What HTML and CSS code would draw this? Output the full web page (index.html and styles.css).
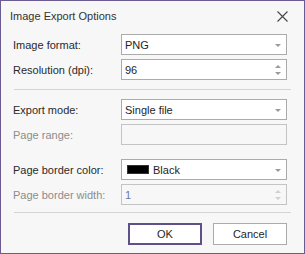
FILE: index.html
```html
<!DOCTYPE html>
<html>
<head>
<meta charset="utf-8">
<link rel="stylesheet" href="styles.css">
</head>
<body>
<div class="dialog">
  <div class="titlebar">
    <span class="title">Image Export Options</span>
    <svg class="close" width="11" height="11" viewBox="0 0 11 11"><path d="M0.5 0.5 L10.5 10.5 M10.5 0.5 L0.5 10.5" stroke="#444" stroke-width="1.1" fill="none"/></svg>
  </div>
  <div class="content">
    <div class="grid">
      <label class="lbl">Image format:</label>
      <div class="field"><span class="val">PNG</span><span class="arrow"></span></div>
      <label class="lbl">Resolution (dpi):</label>
      <div class="field"><span class="val">96</span><span class="spin"><span class="up"></span><span class="down"></span></span></div>
    </div>
    <div class="sep"></div>
    <div class="grid">
      <label class="lbl">Export mode:</label>
      <div class="field"><span class="val">Single file</span><span class="arrow"></span></div>
      <label class="lbl dis">Page range:</label>
      <div class="field disabled"><span class="val"></span></div>
    </div>
    <div class="grid group">
      <label class="lbl">Page border color:</label>
      <div class="field"><span class="swatch"></span><span class="val">Black</span><span class="arrow"></span></div>
      <label class="lbl dis">Page border width:</label>
      <div class="field disabled"><span class="val num">1</span><span class="spin dis"><span class="up"></span><span class="down"></span></span></div>
    </div>
    <div class="sep sep2"></div>
    <div class="buttons">
      <button class="btn default">OK</button>
      <button class="btn">Cancel</button>
    </div>
  </div>
</div>
</body>
</html>
```
FILE: styles.css
```css
html, body {
  margin: 0;
  padding: 0;
  background: #f7f7f7;
}
.dialog {
  width: 305px;
  height: 254px;
  box-sizing: border-box;
  border: 1px solid #6a5c93;
  background: #f7f7f7;
  font-family: "Liberation Sans", Arial, sans-serif;
  font-size: 11px;
  color: #262626;
  display: flex;
  flex-direction: column;
}
.titlebar {
  height: 29px;
  display: flex;
  align-items: center;
  justify-content: space-between;
  padding: 0 16px 1px 9px;
  flex-shrink: 0;
}
.title {
  font-size: 11px;
  color: #333;
}
.close {
  display: block;
  margin-top: 1px;
}
.content {
  padding: 3px 17px 0 12px;
  display: flex;
  flex-direction: column;
}
.grid {
  display: grid;
  grid-template-columns: 108px 1fr;
  row-gap: 4px;
  align-items: center;
}
.group {
  margin-top: 14px;
}
.lbl {
  color: #2a2a2a;
}
.lbl.dis {
  color: #8c8c8c;
}
.field {
  height: 21px;
  box-sizing: border-box;
  border: 1px solid #ababab;
  background: #fff;
  display: flex;
  align-items: center;
  padding: 0 0 0 3px;
  position: relative;
}
.field.disabled {
  background: #f7f7f7;
  border-color: #c4c4c4;
}
.val {
  flex: 1;
  color: #1e1e1e;
}
.val.num {
  color: #6a78a8;
}
.arrow {
  width: 0;
  height: 0;
  border-left: 3px solid transparent;
  border-right: 3px solid transparent;
  border-top: 3px solid #9a9a9a;
  margin-right: 5px;
  margin-top: 1px;
}
.spin {
  display: flex;
  flex-direction: column;
  gap: 4px;
  margin-right: 5px;
}
.spin .up {
  width: 0;
  height: 0;
  border-left: 3px solid transparent;
  border-right: 3px solid transparent;
  border-bottom: 3px solid #9a9a9a;
}
.spin .down {
  width: 0;
  height: 0;
  border-left: 3px solid transparent;
  border-right: 3px solid transparent;
  border-top: 3px solid #9a9a9a;
}
.spin.dis .up { border-bottom-color: #d0d0d0; }
.spin.dis .down { border-top-color: #d0d0d0; }
.swatch {
  width: 20px;
  height: 7px;
  background: #000;
  border: 1px solid #333;
  margin: 0 4px 0 2px;
}
.sep {
  height: 1px;
  background: #d4d4d4;
  margin: 9px -4px 9px 1px;
}
.sep2 {
  margin-top: 7px;
  margin-bottom: 10px;
}
.buttons {
  display: flex;
  justify-content: flex-end;
  gap: 11px;
}
.btn {
  width: 74px;
  height: 22px;
  box-sizing: border-box;
  border: 1px solid #ababab;
  background: #fff;
  font-family: "Liberation Sans", Arial, sans-serif;
  font-size: 11px;
  color: #262626;
  padding: 0;
}
.btn.default {
  border: 2px solid #5e5189;
}
```
